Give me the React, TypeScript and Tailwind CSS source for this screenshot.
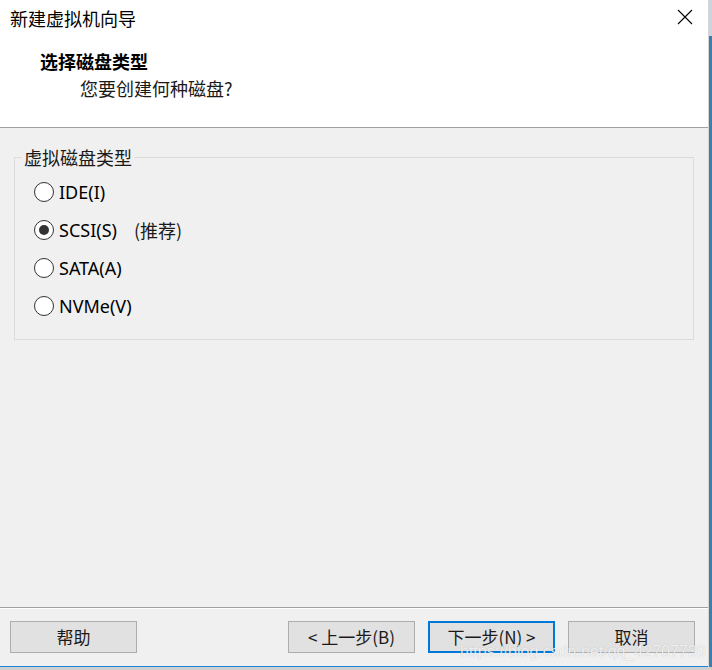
import React from "react";

const cjk = { fontFamily: '"Noto Sans CJK SC", "Noto Sans", sans-serif' };
const latin = { fontFamily: '"Noto Sans", "Noto Sans CJK SC", sans-serif' };

const options = [
    { label: "IDE(I)", checked: false },
    { label: "SCSI(S)", checked: true, note: "(推荐)" },
    { label: "SATA(A)", checked: false },
    { label: "NVMe(V)", checked: false },
];

function Radio({ checked }: { checked: boolean }) {
    return (
        <div className="w-[20px] h-[20px] rounded-full border border-[#333333] bg-white flex items-center justify-center shrink-0">
            {checked && <div className="w-[10px] h-[10px] rounded-full bg-[#333333]" />}
        </div>
    );
}

function Btn({ children, primary }: { children: React.ReactNode; primary?: boolean }) {
    return (
        <button
            className={
                primary
                    ? "w-[127px] h-[32px] border-2 border-[#0078d7] bg-[#e1e1e1] text-[17px] text-[#1a1a1a] flex items-center justify-center"
                    : "w-[127px] h-[32px] border border-[#adadad] bg-[#e1e1e1] text-[17px] text-[#1a1a1a] flex items-center justify-center"
            }
            style={cjk}
        >
            {children}
        </button>
    );
}

export default function App() {
    return (
        <div className="w-[712px] h-[670px] flex flex-col bg-[#cfcfcf] overflow-hidden">
            <div className="flex h-[667px]">
                {/* Window */}
                <div className="w-[708px] h-full flex flex-col bg-[#f0f0f0] relative">
                    {/* Header */}
                    <div className="h-[127px] bg-white relative shrink-0">
                        <div className="absolute left-[10px] top-[6px] text-[18px] leading-[24px] text-black" style={cjk}>
                            新建虚拟机向导
                        </div>
                        <svg className="absolute left-[677px] top-[9px]" width="16" height="16" viewBox="0 0 16 16">
                            <path d="M1 1 L15 15 M15 1 L1 15" stroke="#000" strokeWidth="1.1" fill="none" />
                        </svg>
                        <div className="absolute left-[40px] top-[49px] text-[18px] leading-[24px] font-bold text-black" style={cjk}>
                            选择磁盘类型
                        </div>
                        <div className="absolute left-[80px] top-[76px] text-[18px] leading-[24px] text-[#1a1a1a]" style={cjk}>
                            您要创建何种磁盘?
                        </div>
                    </div>
                    <div className="h-px bg-[#a0a0a0] shrink-0" />

                    {/* Body */}
                    <div className="flex-1 px-[14px] pt-[29px]">
                        <div className="relative border border-[#dcdcdc] pt-[15px] pb-[14px] pl-[19px]">
                            <div className="absolute left-[7px] top-[-10px] px-[2px] bg-[#f0f0f0] text-[18px] leading-[18px] text-[#1a1a1a]" style={cjk}>
                                虚拟磁盘类型
                            </div>
                            {options.map((o) => (
                                <div key={o.label} className="h-[38px] flex items-center gap-[5px]">
                                    <Radio checked={o.checked} />
                                    <span className="text-[18px] text-black" style={latin}>
                                        {o.label}
                                    </span>
                                    {o.note && (
                                        <span className="ml-[12px] text-[18px] text-[#1a1a1a]" style={cjk}>
                                            {o.note}
                                        </span>
                                    )}
                                </div>
                            ))}
                        </div>
                    </div>

                    {/* Footer */}
                    <div className="h-px bg-[#a0a0a0] shrink-0" />
                    <div className="h-px bg-white shrink-0" />
                    <div className="h-[57px] shrink-0 flex items-start pt-[12px] pl-[10px] pr-[13px]">
                        <Btn>帮助</Btn>
                        <div className="flex-1" />
                        <div className="flex gap-[13px]">
                            <Btn>&lt; 上一步(B)</Btn>
                            <Btn primary>下一步(N) &gt;</Btn>
                            <Btn>取消</Btn>
                        </div>
                    </div>
                    <div className="h-px bg-[#1883d7] shrink-0" />

                    <div
                        className="absolute left-[460px] top-[642px] text-[16px] leading-[20px] text-white/80 whitespace-nowrap"
                        style={{ fontFamily: '"Liberation Sans", sans-serif', textShadow: "0 0 1px rgba(0,0,0,0.25)" }}
                    >
                        https://blog.csdn.net/qq_42707739
                    </div>
                </div>
                <div className="w-px bg-[#d6d6d6]" />
                <div className="w-[3px] flex flex-col">
                    <div className="h-[36px] bg-[#c9d6e0]" />
                    <div className="flex-1 bg-[#3a7fae]" />
                </div>
            </div>
        </div>
    );
}
